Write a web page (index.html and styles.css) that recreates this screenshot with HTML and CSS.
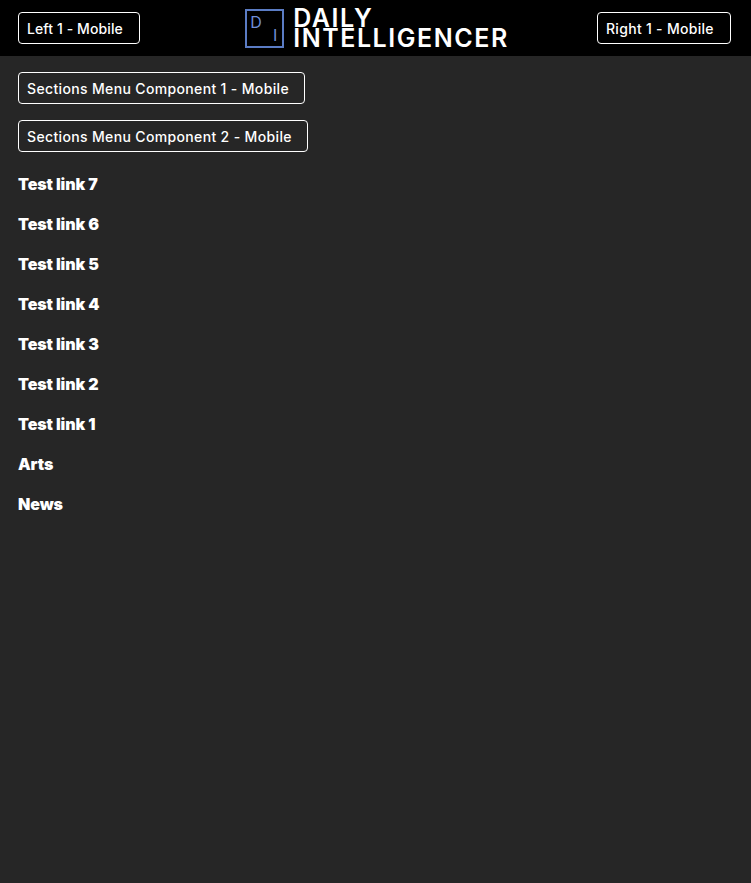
FILE: index.html
```html
<!DOCTYPE html>
<html>
<head>
  <title>Daily Intelligencer</title>
  <link rel="stylesheet" href="styles.css">
</head>
<body>
  <header class="top-bar">
    <div class="slot slot-left">Left 1 - Mobile</div>
    <a class="logo" href="#">
      <span class="logo-mark">
        <span class="logo-d">D</span>
        <span class="logo-i">I</span>
      </span>
      <span class="logo-name">
        <span class="logo-line">DAILY</span>
        <span class="logo-line">INTELLIGENCER</span>
      </span>
    </a>
    <div class="slot slot-right">Right 1 - Mobile</div>
  </header>
  <main class="menu">
    <div class="slot slot-menu-1">Sections Menu Component 1 - Mobile</div>
    <div class="slot slot-menu-2">Sections Menu Component 2 - Mobile</div>
    <nav class="links">
      <a href="#">Test link 7</a>
      <a href="#">Test link 6</a>
      <a href="#">Test link 5</a>
      <a href="#">Test link 4</a>
      <a href="#">Test link 3</a>
      <a href="#">Test link 2</a>
      <a href="#">Test link 1</a>
      <a href="#">Arts</a>
      <a href="#">News</a>
    </nav>
  </main>
</body>
</html>
```

FILE: styles.css
```css
html, body {
  height: 100%;
}
body {
  margin: 0;
  background-color: #262626;
  color: #fff;
  font-family: "Inter", "Open Sans", sans-serif;
}
.top-bar {
  display: flex;
  align-items: center;
  justify-content: space-between;
  height: 56px;
  padding: 0 20px 0 18px;
  background-color: #000;
}
.slot {
  box-sizing: border-box;
  height: 32px;
  padding: 0 8px;
  border: 1px solid #fff;
  border-radius: 4px;
  font-size: 14px;
  font-weight: 500;
  letter-spacing: 0.35px;
  line-height: 31px;
  white-space: nowrap;
}
.slot-left {
  width: 122px;
  letter-spacing: 0.1px;
}
.slot-right {
  width: 134px;
  letter-spacing: 0.3px;
}
.slot-menu-1 {
  width: 287px;
}
.slot-menu-2 {
  width: 290px;
}
.logo {
  display: flex;
  align-items: center;
  gap: 9px;
  margin-left: 17px;
  color: #fff;
  text-decoration: none;
}
.logo-mark {
  position: relative;
  box-sizing: border-box;
  width: 39px;
  height: 39px;
  border: 2px solid #5b7cc4;
}
.logo-d,
.logo-i {
  position: absolute;
  color: #6f8fd8;
  font-size: 16px;
  line-height: 16px;
}
.logo-d {
  top: 3px;
  left: 3px;
}
.logo-i {
  right: 5px;
  bottom: 3px;
}
.logo-name {
  font-size: 25px;
  font-weight: 600;
  letter-spacing: 1.55px;
}
.logo-line {
  display: block;
  height: 20px;
  line-height: 20px;
}
.menu {
  display: flex;
  flex-direction: column;
  align-items: flex-start;
  gap: 16px;
  padding: 16px 18px;
}
.links {
  display: flex;
  flex-direction: column;
  gap: 16px;
  margin-top: 4px;
}
.links a {
  color: #fff;
  font-size: 16px;
  font-weight: 900;
  letter-spacing: -0.1px;
  line-height: 24px;
  text-decoration: none;
}
```
